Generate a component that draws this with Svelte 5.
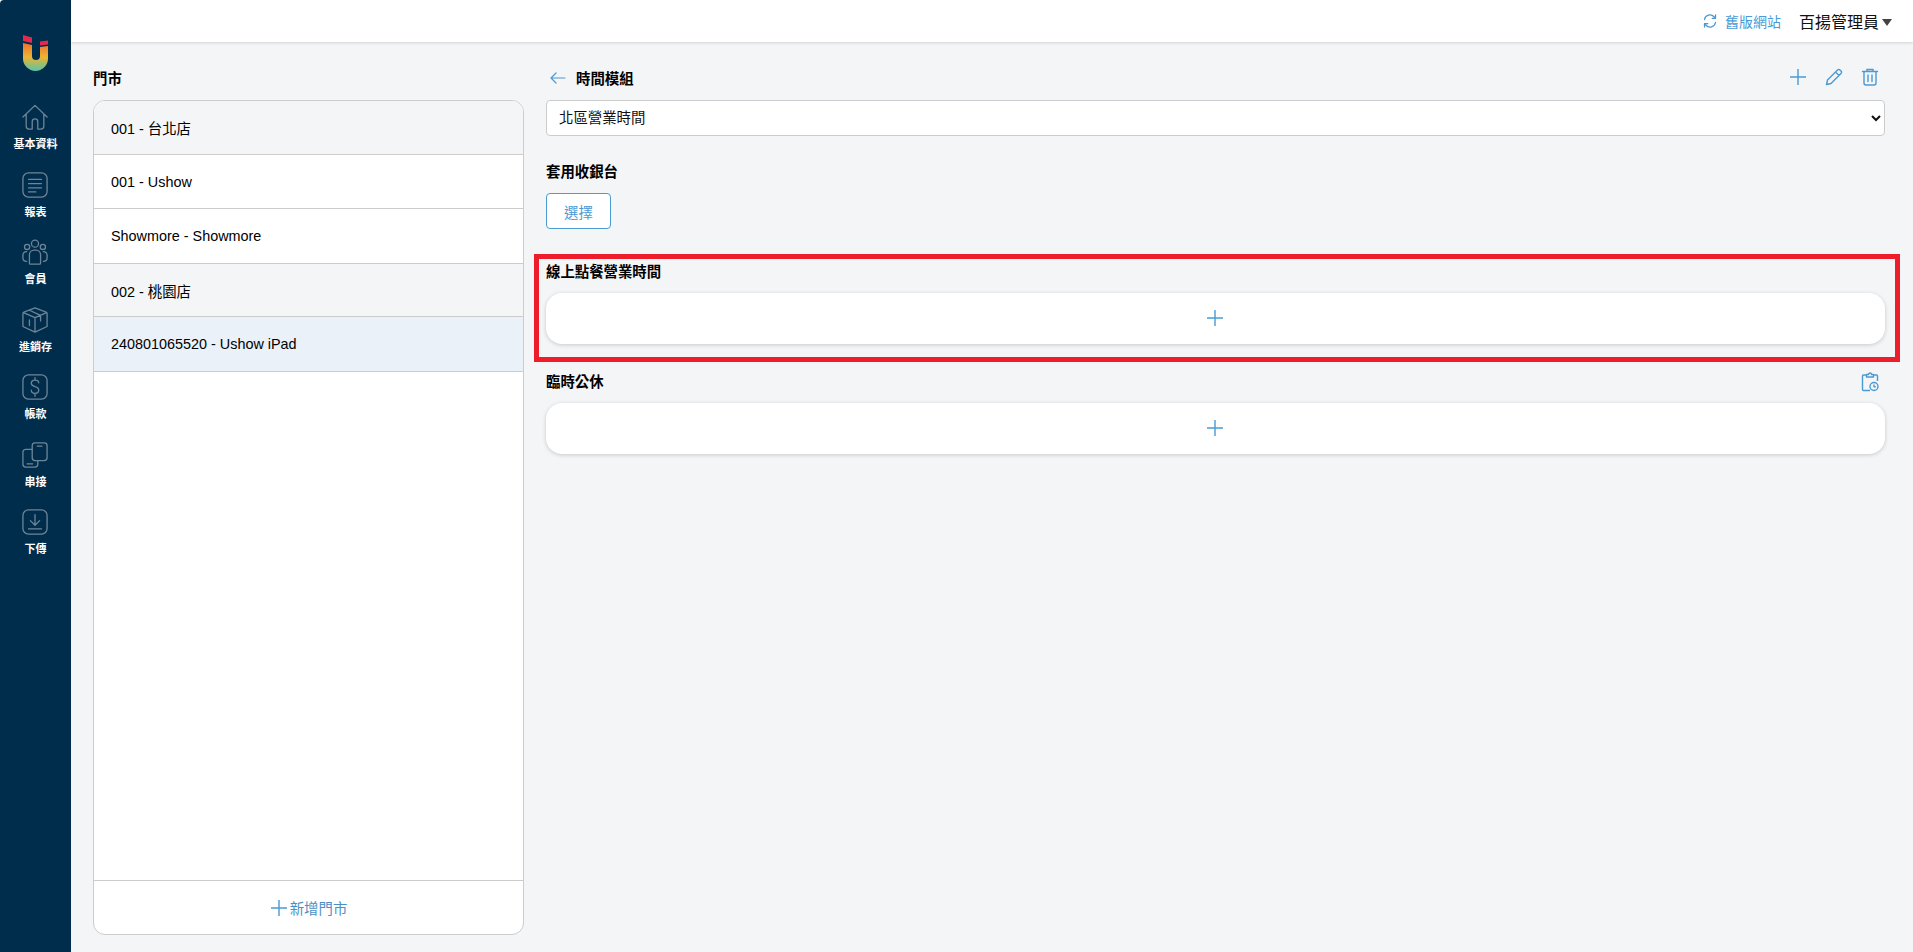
<script>
  const nav = [
    { label: '基本資料', icon: 'home' },
    { label: '報表', icon: 'report' },
    { label: '會員', icon: 'users' },
    { label: '進銷存', icon: 'box' },
    { label: '帳款', icon: 'money' },
    { label: '串接', icon: 'link' },
    { label: '下傳', icon: 'down' }
  ];
  const stores = [
    { text: '001 - 台北店', tone: 'grey' },
    { text: '001 - Ushow', tone: '' },
    { text: 'Showmore - Showmore', tone: '' },
    { text: '002 - 桃園店', tone: 'grey' },
    { text: '240801065520 - Ushow iPad', tone: 'active' }
  ];
</script>

<div class="app">
  <aside class="side">
    <svg class="logo" viewBox="0 0 25 36" width="25" height="36">
      <defs>
        <linearGradient id="lg" x1="0" y1="0" x2="0" y2="1">
          <stop offset="0" stop-color="#f0702e" />
          <stop offset="0.5" stop-color="#edb431" />
          <stop offset="1" stop-color="#55c6ab" />
        </linearGradient>
      </defs>
      <path d="M0 8L9 10V21a4 4 0 0 0 8 0V12L25 11V23.500a12.500 12.500 0 0 1-25 0z" fill="url(#lg)" />
      <path d="M0 0L9 2.500V8L0 6zM17 6.500L25 5.500V9.500L17 10.500z" fill="#e8284f" />
    </svg>
    {#each nav as n}
      <div class="nav-item">
        <svg class="nav-icon" viewBox="0 0 28 28" width="26" height="26" fill="none" stroke="#6d8598" stroke-width="1.4" stroke-linecap="round" stroke-linejoin="round">
          {#if n.icon === 'home'}
            <path d="M1 14L14 1.500 27 14M4.500 11v13a3 3 0 0 0 3 3h3.500v-8a3 3 0 0 1 6 0v8h3.500a3 3 0 0 0 3-3V11" />
          {:else if n.icon === 'report'}
            <rect x="1" y="1" width="26" height="26" rx="6" />
            <path d="M7 8h14M7 12.500h14M7 17h14M7 21.500h8" />
          {:else if n.icon === 'users'}
            <circle cx="14" cy="5" r="3.800" />
            <circle cx="5.500" cy="8.500" r="2.800" />
            <circle cx="22.500" cy="8.500" r="2.800" />
            <path d="M8 26v-9a5 5 0 0 1 5-5h2a5 5 0 0 1 5 5v9a1 1 0 0 1-1 1H9a1 1 0 0 1-1-1zM5 24c-2.500 0-4-1.500-4-3.500V17a4 4 0 0 1 4-3.500M23 24c2.500 0 4-1.500 4-3.500V17a4 4 0 0 0-4-3.500" />
          {:else if n.icon === 'box'}
            <path d="M14 1l12 4.500a1.500 1.500 0 0 1 1 1.500v14l-13 6-13-6V7a1.500 1.500 0 0 1 1-1.500zM1.500 6L14 11.500 26.500 6M14 11.500V27M8 3.500L20 9v6M8 14v6" />
          {:else if n.icon === 'money'}
            <rect x="1" y="1" width="26" height="26" rx="6" />
            <path d="M18 9.500c0-2-2-3-4-3s-4 1.200-4 3.500 2 3 4 3.500 4 1.500 4 3.800-2 3.500-4 3.500-4-1.200-4-3.300M14 4v2.500M14 21v3" />
          {:else if n.icon === 'link'}
            <rect x="11" y="1" width="16" height="19" rx="3" />
            <path d="M11 8H4a3 3 0 0 0-3 3v13a3 3 0 0 0 3 3h10a3 3 0 0 0 3-3v-4" />
            <path d="M16.500 4.500h5M5.500 23.500h6" />
          {:else}
            <rect x="1" y="1" width="26" height="26" rx="6" />
            <path d="M14 6v11M9 12.500l5 5 5-5M7 21.500h14" />
          {/if}
        </svg>
        <span>{n.label}</span>
      </div>
    {/each}
  </aside>

  <div class="body">
    <header class="top">
      <a class="old">
        <svg viewBox="0 0 16 16" width="16" height="16" fill="none" stroke="#4a9ad4" stroke-width="1.3" stroke-linecap="round" stroke-linejoin="round">
          <path d="M2.500 6.500A5.500 5.500 0 0 1 12 3.800l1.500 1.500M13.500 2v3.300h-3.300M13.500 9.500A5.500 5.500 0 0 1 4 12.200l-1.500-1.500M2.500 14v-3.300h3.300" />
        </svg>
        舊版網站
      </a>
      <div class="user">百揚管理員<i class="caret"></i></div>
    </header>

    <main class="content">
      <section class="left">
        <h3 class="store-title">門市</h3>
        <div class="panel">
          <ul class="list">
            {#each stores as s}
              <li class={s.tone}>{s.text}</li>
            {/each}
          </ul>
          <div class="add-store">
            <svg viewBox="0 0 18 18" width="18" height="18" fill="none" stroke="#4a9ad4" stroke-width="1.4"><path d="M9 1v16M1 9h16" /></svg>
            <span>新增門市</span>
          </div>
        </div>
      </section>

      <section class="right">
        <div class="head">
          <div class="head-title">
            <svg viewBox="0 0 16 12" width="16" height="12" fill="none" stroke="#4a9ad4" stroke-width="1.200" stroke-linecap="round" stroke-linejoin="round"><path d="M15 6H1M6 1L1 6l5 5" /></svg>
            <h3>時間模組</h3>
          </div>
          <div class="tools">
            <svg viewBox="0 0 18 18" width="18" height="18" fill="none" stroke="#4a9ad4" stroke-width="1.400"><path d="M9 1v16M1 9h16" /></svg>
            <svg viewBox="0 0 18 18" width="18" height="18" fill="none" stroke="#4a9ad4" stroke-width="1.400" stroke-linejoin="round"><path d="M1.500 16.500l1-4.500L12.500 2a1.800 1.800 0 0 1 2.500 0l1 1a1.800 1.800 0 0 1 0 2.500L6 15.500zM10.500 4l3.500 3.500" /></svg>
            <svg viewBox="0 0 18 18" width="18" height="18" fill="none" stroke="#4a9ad4" stroke-width="1.400" stroke-linecap="round"><path d="M1.500 3.500h15M6 3.500V1.500h6v2M3 3.500V15a2 2 0 0 0 2 2h8a2 2 0 0 0 2-2V3.500M7 7v6.500M11 7v6.500" /></svg>
          </div>
        </div>
        <select class="sel">
          <option>北區營業時間</option>
        </select>

        <h3 class="apply-title">套用收銀台</h3>
        <button class="choose">選擇</button>

        <h3 class="online-title">線上點餐營業時間</h3>
        <div class="card">
          <svg viewBox="0 0 18 18" width="18" height="18" fill="none" stroke="#4a9ad4" stroke-width="1.400"><path d="M9 1v16M1 9h16" /></svg>
        </div>

        <div class="hol-head">
          <h3>臨時公休</h3>
          <svg viewBox="0 0 18 20" width="18" height="20" fill="none" stroke="#4a9ad4" stroke-width="1.400" stroke-linejoin="round">
            <path d="M5 3H2.500a1 1 0 0 0-1 1v13.500a1 1 0 0 0 1 1H9M13 3h2.500a1 1 0 0 1 1 1v5" />
            <path d="M5.500 5V2.500h2a1.500 1.500 0 0 1 3 0h2V5z" />
            <circle cx="13" cy="14.500" r="4" />
            <path d="M13 12.500v2.200h1.800" />
          </svg>
        </div>
        <div class="card">
          <svg viewBox="0 0 18 18" width="18" height="18" fill="none" stroke="#4a9ad4" stroke-width="1.400"><path d="M9 1v16M1 9h16" /></svg>
        </div>

        <div class="highlight"></div>
      </section>
    </main>
  </div>
</div>

<style>
  :global(body) {
    margin: 0;
    background: #f4f5f7;
    font-family: "Liberation Sans", "Noto Sans CJK TC", sans-serif;
    font-size: 14.4px;
    color: #000;
  }
  .app {
    display: flex;
    height: 952px;
    overflow: hidden;
  }
  .side {
    width: 71px;
    flex: none;
    background: #002d4b;
    display: flex;
    flex-direction: column;
    align-items: center;
    padding-top: 35px;
    box-sizing: border-box;
    border-top-left-radius: 4px;
  }
  .logo { margin-bottom: 33px; }
  .nav-item {
    display: flex;
    flex-direction: column;
    align-items: center;
    height: 67.5px;
    color: #fff;
    font-size: 11px;
    font-weight: 700;
    line-height: 14px;
  }
  .nav-icon { margin: 0 1px 7px 0; }
  .nav-item span { white-space: nowrap; }
  .body {
    flex: 1;
    min-width: 0;
    display: flex;
    flex-direction: column;
  }
  .top {
    height: 42px;
    background: #fff;
    box-shadow: 0 1px 3px rgba(0,0,0,.14);
    display: flex;
    align-items: center;
    justify-content: flex-end;
    padding-right: 21px;
    box-sizing: border-box;
    flex: none;
  }
  .old {
    display: flex;
    align-items: center;
    gap: 7px;
    color: #4a9ad4;
    font-size: 14px;
    margin-right: 18px;
  }
  .user {
    display: flex;
    align-items: center;
    font-size: 16px;
    color: #111;
  }
  .caret {
    width: 0;
    height: 0;
    border-left: 5px solid transparent;
    border-right: 5px solid transparent;
    border-top: 7px solid #444;
    margin-left: 3px;
    margin-top: 2px;
  }
  .content {
    flex: 1;
    display: flex;
    min-height: 0;
    padding: 26px 28px 17px 22px;
    gap: 22px;
  }
  h3 {
    margin: 0;
    font-size: 14.4px;
    font-weight: 700;
    line-height: 20px;
    color: #000;
  }
  .left {
    width: 431px;
    flex: none;
    display: flex;
    flex-direction: column;
  }
  .store-title { margin-bottom: 11px; padding-top: 1px; }
  .panel {
    flex: 1;
    background: #fff;
    border: 1px solid #ccc;
    border-radius: 12px;
    display: flex;
    flex-direction: column;
    overflow: hidden;
  }
  .list {
    list-style: none;
    margin: 0;
    padding: 0;
    flex: 1;
  }
  .list li {
    height: 53px;
    padding-left: 17px;
    display: flex;
    align-items: center;
    border-bottom: 1px solid #ccc;
    font-size: 14.4px;
  }
  .list li:nth-child(3), .list li:nth-child(5) { height: 54px; }
  .list li:nth-child(4) { height: 52px; }
  .list li.grey { background: #f4f5f7; }
  .list li.active { background: #eaf1f8; }
  .add-store {
    height: 53px;
    border-top: 1px solid #ccc;
    display: flex;
    align-items: center;
    justify-content: center;
    gap: 2px;
    color: #4a8fc4;
    font-size: 14.4px;
  }
  .right {
    flex: 1;
    min-width: 0;
    position: relative;
    display: flex;
    flex-direction: column;
    align-items: stretch;
  }
  .head {
    display: flex;
    align-items: center;
    justify-content: space-between;
    height: 20px;
    margin-bottom: 12px;
  }
  .head-title {
    display: flex;
    align-items: center;
    gap: 10px;
    padding-left: 4px;
  }
  .head-title h3 { padding-top: 1px; }
  .tools {
    display: flex;
    gap: 18px;
    padding-right: 6px;
    margin-top: -2px;
  }
  .sel {
    height: 36px;
    width: 100%;
    background: #fff;
    border: 1px solid #ccc;
    border-radius: 4px;
    padding-left: 8px;
    font-family: inherit;
    font-size: 14.4px;
    color: #111;
  }
  .apply-title { margin-top: 26px; }
  .choose {
    align-self: flex-start;
    margin-top: 11px;
    width: 65px;
    height: 36px;
    background: #fff;
    border: 1px solid #4a9ad4;
    border-radius: 4px;
    color: #4a9ad4;
    font-family: inherit;
    font-size: 14.4px;
  }
  .online-title { margin-top: 33px; }
  .card {
    margin-top: 11px;
    height: 51px;
    box-sizing: border-box;
    padding: 0 2px 2px 0;
    background: #fff;
    border-radius: 16px;
    box-shadow: 0 1px 4px rgba(0,0,0,.18);
    display: flex;
    align-items: center;
    justify-content: center;
  }
  .hol-head {
    margin-top: 28px;
    height: 20px;
    display: flex;
    align-items: center;
    justify-content: space-between;
    padding-right: 6px;
  }
  .highlight {
    position: absolute;
    left: -12px;
    right: -15px;
    top: 186px;
    height: 98px;
    border: 5px solid #ee1d2b;
    pointer-events: none;
  }
</style>
